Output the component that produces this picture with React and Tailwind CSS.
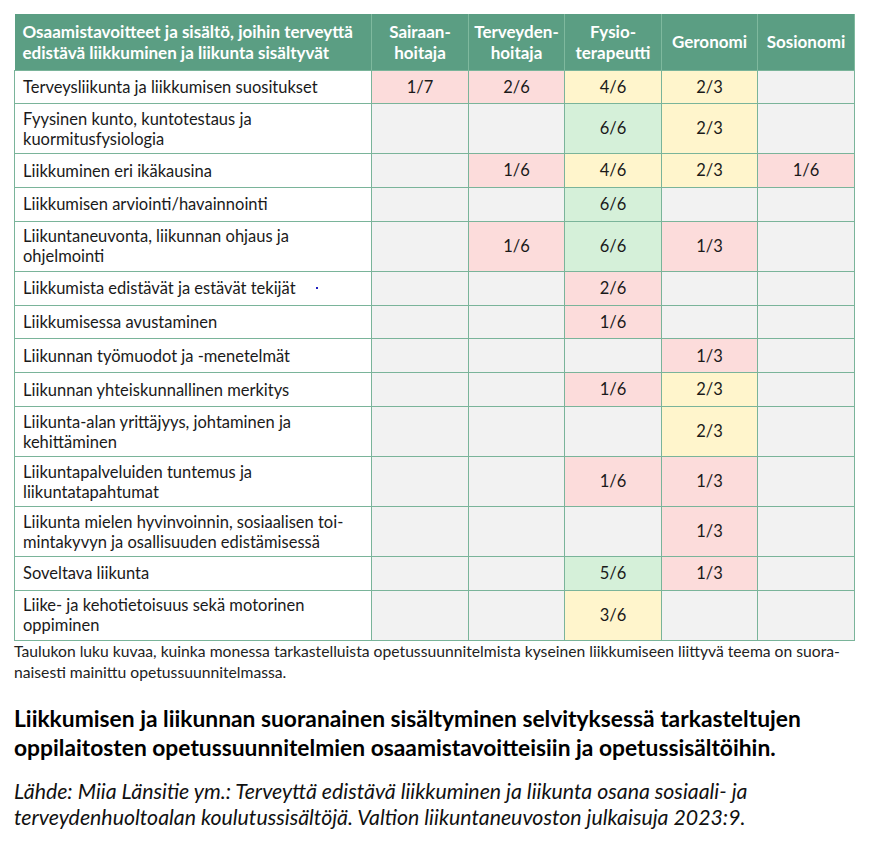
const cols = ["Sairaan-\nhoitaja", "Terveyden-\nhoitaja", "Fysio-\nterapeutti", "Geronomi", "Sosionomi"];

const P = "bg-[#fcdcdb]";
const Y = "bg-[#fff5cc]";
const G = "bg-[#d5f0d9]";

// each row: label, tall, cells [value, colour] or null
const rows = [
  ["Terveysliikunta ja liikkumisen suositukset", false, [["1/7", P], ["2/6", P], ["4/6", Y], ["2/3", Y], null]],
  ["Fyysinen kunto, kuntotestaus ja\nkuormitusfysiologia", true, [null, null, ["6/6", G], ["2/3", Y], null]],
  ["Liikkuminen eri ikäkausina", false, [null, ["1/6", P], ["4/6", Y], ["2/3", Y], ["1/6", P]]],
  ["Liikkumisen arviointi/havainnointi", false, [null, null, ["6/6", G], null, null]],
  ["Liikuntaneuvonta, liikunnan ohjaus ja\nohjelmointi", true, [null, ["1/6", P], ["6/6", G], ["1/3", P], null]],
  ["Liikkumista edistävät ja estävät tekijät", false, [null, null, ["2/6", P], null, null], true],
  ["Liikkumisessa avustaminen", false, [null, null, ["1/6", P], null, null]],
  ["Liikunnan työmuodot ja -menetelmät", false, [null, null, null, ["1/3", P], null]],
  ["Liikunnan yhteiskunnallinen merkitys", false, [null, null, ["1/6", P], ["2/3", Y], null]],
  ["Liikunta-alan yrittäjyys, johtaminen ja\nkehittäminen", true, [null, null, null, ["2/3", Y], null]],
  ["Liikuntapalveluiden tuntemus ja\nliikuntatapahtumat", true, [null, null, ["1/6", P], ["1/3", P], null]],
  ["Liikunta mielen hyvinvoinnin, sosiaalisen toi-\nmintakyvyn ja osallisuuden edistämisessä", true, [null, null, null, ["1/3", P], null]],
  ["Soveltava liikunta", false, [null, null, ["5/6", G], ["1/3", P], null]],
  ["Liike- ja kehotietoisuus sekä motorinen\noppiminen", true, [null, null, ["3/6", Y], null, null]],
];

export default function App() {
  return (
    <div className="w-[870px] h-[842px] bg-white pt-[14px] px-[14px] text-[#1a1a1a]" style={{ fontFamily: "Lato, 'Noto Sans', sans-serif" }}>
      <table className="border-collapse table-fixed w-[840px]">
        <colgroup>
          <col className="w-[357px]" />
          <col className="w-[97px]" />
          <col className="w-[96px]" />
          <col className="w-[97px]" />
          <col className="w-[96px]" />
          <col className="w-[97px]" />
        </colgroup>
        <thead>
          <tr className="h-[56px] bg-[#5b9e83] text-white font-bold text-[17px] leading-[21px]">
            <th className="text-left font-bold px-[8px] border-r border-[#7fb99e] border-b border-b-[#7ab49a] whitespace-nowrap">
              Osaamistavoitteet ja sisältö, joihin terveyttä<br />edistävä liikkuminen ja liikunta sisältyvät
            </th>
            {cols.map((c) => (
              <th key={c} className="text-center font-bold px-0 border-x border-[#7fb99e] whitespace-pre-line">
                {c}
              </th>
            ))}
          </tr>
        </thead>
        <tbody>
          {rows.map(([label, tall, cells, dot]) => (
            <tr key={label} className={tall ? "h-[50px]" : "h-[33.8px]"}>
              <td className="border border-[#7ab49a] px-[8px] text-[16.5px] leading-[20px] whitespace-pre-line bg-white">
                {label}
                {dot && <span className="inline-block w-[2px] h-[2px] bg-[#2020c0] ml-[20px] align-[5px]" />}
              </td>
              {cells.map((c, i) => (
                <td key={i} className={`border border-[#7ab49a] text-center text-[16.5px] ${c ? c[1] : "bg-[#f2f2f2]"}`}>
                  {c ? c[0] : ""}
                </td>
              ))}
            </tr>
          ))}
        </tbody>
      </table>
      <p className="text-[15.7px] leading-[21px] text-[#222] whitespace-nowrap">
        Taulukon luku kuvaa, kuinka monessa tarkastelluista opetussuunnitelmista kyseinen liikkumiseen liittyvä teema on suora-<br />naisesti mainittu opetussuunnitelmassa.
      </p>
      <h2 className="font-bold text-[22.8px] leading-[29px] mt-[21px] text-black whitespace-nowrap">
        Liikkumisen ja liikunnan suoranainen sisältyminen selvityksessä tarkasteltujen<br />oppilaitosten opetussuunnitelmien osaamistavoitteisiin ja opetussisältöihin.
      </h2>
      <p className="italic text-[21.3px] leading-[26px] mt-[16px] text-[#111] whitespace-nowrap">
        Lähde: Miia Länsitie ym.: Terveyttä edistävä liikkuminen ja liikunta osana sosiaali- ja<br />terveydenhuoltoalan koulutussisältöjä. Valtion liikuntaneuvoston julkaisuja 2023:9.
      </p>
    </div>
  );
}
